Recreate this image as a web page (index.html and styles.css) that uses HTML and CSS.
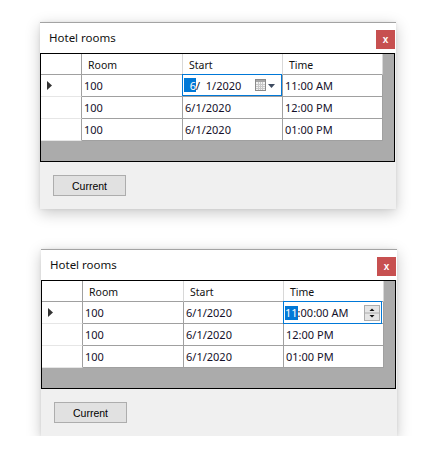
FILE: index.html
```html
<!DOCTYPE html>
<html>
<head>
<meta charset="utf-8">
<link rel="stylesheet" href="styles.css">
</head>
<body>
<div class="page">
  <div class="window">
    <div class="titlebar">
      <span class="title">Hotel rooms</span>
      <span class="close">x</span>
    </div>
    <div class="grid">
      <div class="table">
        <div class="hdr corner"></div>
        <div class="hdr">Room</div>
        <div class="hdr">Start</div>
        <div class="hdr">Time</div>

        <div class="rh"><svg class="arrow" width="5" height="9" viewBox="0 0 5 9"><polygon points="0,0 5,4.5 0,9" fill="#333"/></svg></div>
        <div class="cell">100</div>
        <div class="cell">
          <div class="editor">
            <span class="sel date-sel">6</span><span class="txt">/  1/2020</span>
            <span class="dd">
              <svg width="11" height="12" viewBox="0 0 11 12">
                <rect x="0.5" y="0.5" width="10" height="11" fill="#f2f2f2" stroke="#8a8a8a"/>
                <rect x="1" y="1" width="9" height="2" fill="#a5a5a5"/>
                <path d="M3.5 3v8M5.5 3v8M7.5 3v8M1 5.5h9M1 7.5h9M1 9.5h9" stroke="#c8c8c8" stroke-width="1"/>
              </svg>
              <svg width="7" height="4" viewBox="0 0 7 4"><polygon points="0,0 7,0 3.5,4" fill="#3d4b60"/></svg>
            </span>
          </div>
        </div>
        <div class="cell">11:00 AM</div>

        <div class="rh"></div>
        <div class="cell">100</div>
        <div class="cell">6/1/2020</div>
        <div class="cell">12:00 PM</div>

        <div class="rh"></div>
        <div class="cell">100</div>
        <div class="cell">6/1/2020</div>
        <div class="cell">01:00 PM</div>
      </div>
    </div>
    <div class="footer">
      <button class="btn">Current</button>
    </div>
  </div>

  <div class="window second">
    <div class="titlebar">
      <span class="title">Hotel rooms</span>
      <span class="close">x</span>
    </div>
    <div class="grid">
      <div class="table">
        <div class="hdr corner"></div>
        <div class="hdr">Room</div>
        <div class="hdr">Start</div>
        <div class="hdr">Time</div>

        <div class="rh"><svg class="arrow" width="5" height="9" viewBox="0 0 5 9"><polygon points="0,0 5,4.5 0,9" fill="#333"/></svg></div>
        <div class="cell">100</div>
        <div class="cell">6/1/2020</div>
        <div class="cell">
          <div class="editor time-editor">
            <span class="sel">11</span><span class="txt">:00:00 AM</span>
            <span class="spin">
              <svg width="16" height="16" viewBox="0 0 16 16">
                <rect x="0.5" y="0.5" width="15" height="15" fill="#e5e5e5" stroke="#acacac"/>
                <path d="M1 8h14" stroke="#acacac"/>
                <polygon points="5.5,6 10.5,6 8,3.5" fill="#111"/>
                <polygon points="5.5,10 10.5,10 8,12.5" fill="#111"/>
              </svg>
            </span>
          </div>
        </div>

        <div class="rh"></div>
        <div class="cell">100</div>
        <div class="cell">6/1/2020</div>
        <div class="cell">12:00 PM</div>

        <div class="rh"></div>
        <div class="cell">100</div>
        <div class="cell">6/1/2020</div>
        <div class="cell">01:00 PM</div>
      </div>
    </div>
    <div class="footer">
      <button class="btn">Current</button>
    </div>
  </div>
</div>
</body>
</html>
```
FILE: styles.css
```css
* { box-sizing: border-box; }

body {
  margin: 0;
  background: #ffffff;
  font-family: "Noto Sans", "Open Sans", sans-serif;
  color: #000;
}

.page {
  padding: 22px 0 0 40px;
  display: flex;
  flex-direction: column;
  align-items: flex-start;
}

.window {
  width: 356px;
  background: #f0f0f0;
  border-top: 1px solid #a3a3a3;
  box-shadow: 0 4px 14px rgba(0, 0, 0, 0.22), 0 0 3px rgba(0, 0, 0, 0.08);
}

.window.second {
  margin: 40px 0 0 1px;
}

.titlebar {
  height: 30px;
  background: #ffffff;
  display: flex;
  justify-content: space-between;
  align-items: center;
  padding: 0 1px 0 9px;
}

.title {
  font-size: 11.5px;
  color: #111;
  margin-top: -1px;
}

.close {
  align-self: flex-start;
  margin-top: 7px;
  width: 19px;
  height: 19px;
  background: #c75050;
  color: #ffffff;
  font-family: "Liberation Sans", sans-serif;
  font-weight: bold;
  font-size: 10px;
  display: flex;
  align-items: center;
  justify-content: center;
  padding-bottom: 1px;
}

.grid {
  width: 355px;
  height: 109px;
  border: 1px solid #000;
  background: #ababab;
}

.table {
  display: grid;
  grid-template-columns: 41px 101px 100px 100px;
  grid-template-rows: 21px 22px 22px 22px;
  width: 342px;
}

.hdr {
  background: #ffffff;
  border-right: 1px solid #d8d8d8;
  border-bottom: 1px solid #a0a0a0;
  font-size: 10.5px;
  padding: 1px 0 0 6px;
  display: flex;
  align-items: center;
  color: #111;
}

.hdr.corner {
  border-right-color: #a0a0a0;
}

.rh {
  background: #ffffff;
  border-right: 1px solid #a0a0a0;
  border-bottom: 1px solid #e6e6e6;
  display: flex;
  align-items: center;
  padding-left: 6px;
}

.cell {
  position: relative;
  background: #ffffff;
  border-right: 1px solid #a0a0a0;
  border-bottom: 1px solid #a0a0a0;
  font-size: 11px;
  padding-left: 2px;
  display: flex;
  align-items: center;
  color: #14102a;
  white-space: pre;
}

.editor {
  position: absolute;
  left: -1px;
  top: -1px;
  width: 100px;
  height: 22px;
  border: 1px solid #0078d7;
  background: #ffffff;
  display: flex;
  align-items: center;
  padding-left: 1px;
  white-space: pre;
}

.time-editor {
  width: 99px;
  height: 23px;
}

.sel {
  background: #0078d7;
  color: #ffffff;
  height: 14px;
  display: inline-flex;
  align-items: center;
  justify-content: flex-end;
}

.date-sel {
  width: 12px;
}

.dd {
  margin-left: auto;
  margin-right: 6px;
  display: flex;
  align-items: center;
  gap: 2px;
}

.dd svg:last-child {
  margin-top: 1px;
}

.spin {
  margin-left: auto;
  margin-right: 1px;
  display: flex;
}

.footer {
  padding: 13px 0 13px 13px;
}

.btn {
  display: block;
  width: 73px;
  height: 21px;
  padding: 0;
  margin: 0;
  background: #e1e1e1;
  border: 1px solid #adadad;
  font-family: "Liberation Sans", sans-serif;
  font-size: 10.5px;
  color: #000;
}
```
